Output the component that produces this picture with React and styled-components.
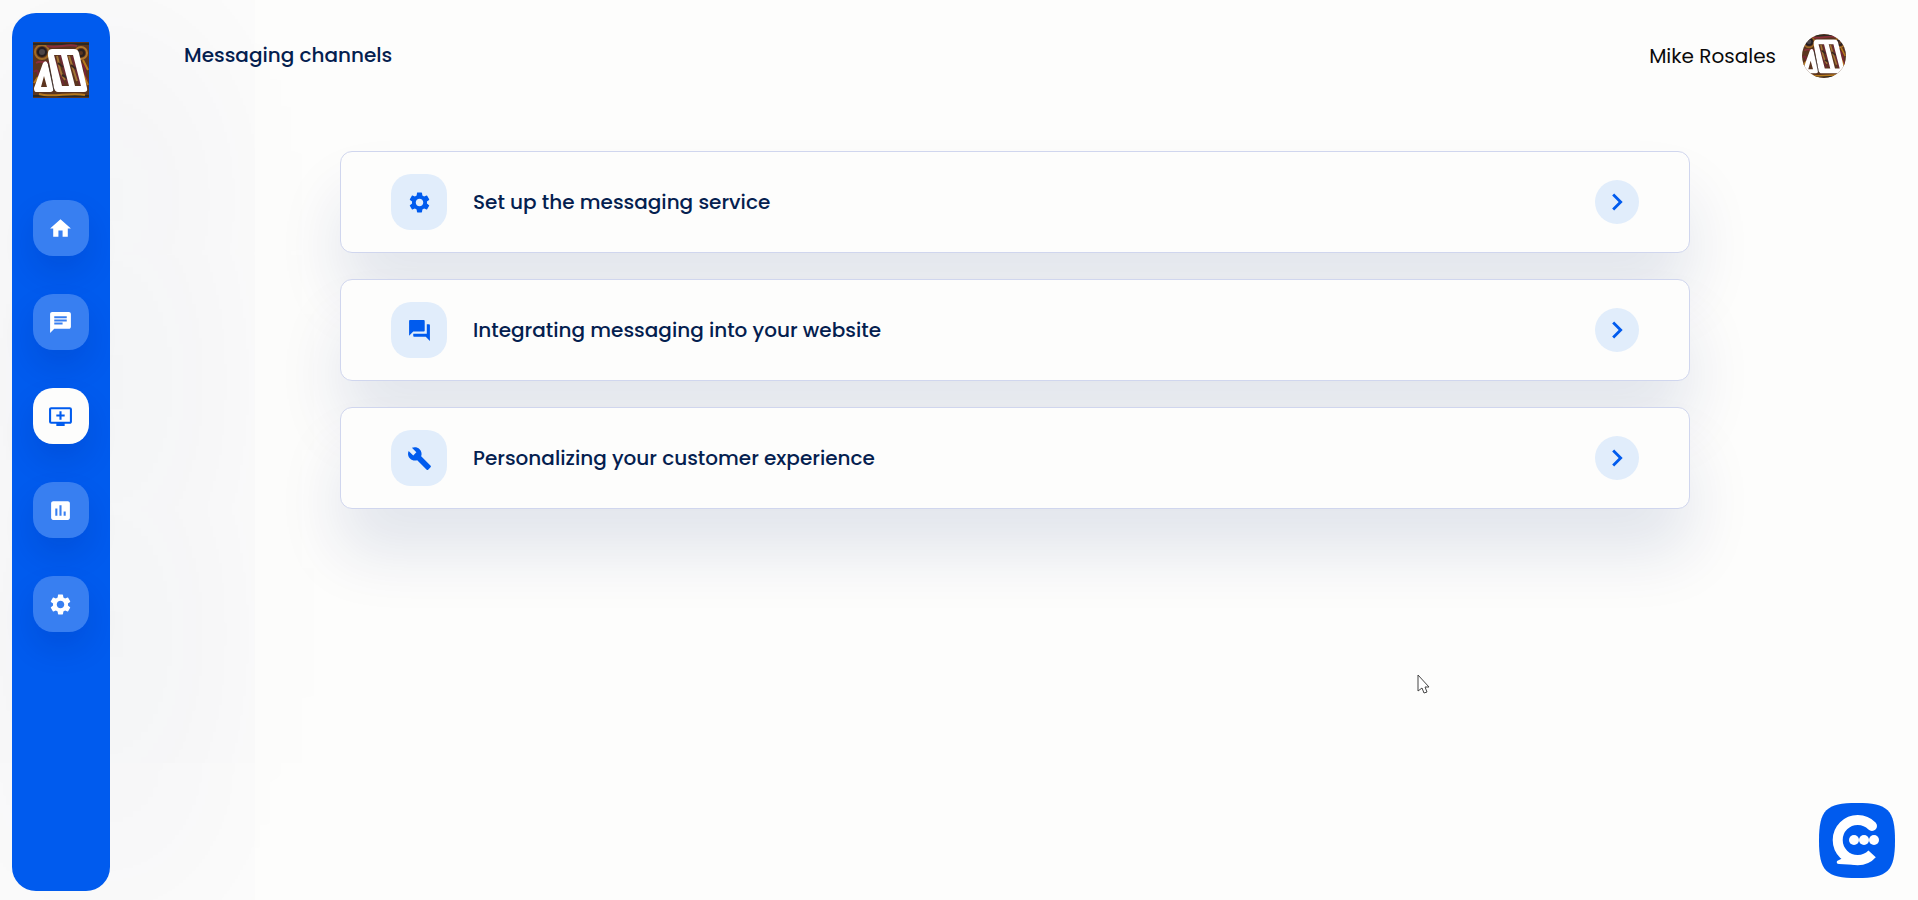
import React from 'react'
import styled, { createGlobalStyle } from 'styled-components'
import {
  MdAddToQueue,
  MdAssessment,
  MdBuild,
  MdChat,
  MdForum,
  MdHome,
  MdKeyboardArrowRight,
  MdSettings,
} from 'react-icons/md'


const GlobalStyle = createGlobalStyle`
  * {
    box-sizing: border-box;
  }

  body {
    background-color: #fdfdfc;
    color: #04204f;
    font-family: Poppins, Inter, "Open Sans", sans-serif;
    font-size: 20px;
    margin: 0;
  }
`

const Page = styled.div`
  display: flex;
  min-height: 100vh;
  padding: 13px 0 9px 12px;
`

const Sidebar = styled.aside`
  align-items: center;
  background-color: #005bee;
  border-radius: 24px;
  box-shadow: 40px 0 260px rgba(0, 32, 110, 0.12);
  display: flex;
  flex: none;
  flex-direction: column;
  gap: 102px;
  padding: 29px 0;
  width: 98px;
  z-index: 1;
`

const LogoLink = styled.a`
  display: block;
  height: 56px;
  width: 56px;
`

const Nav = styled.nav`
  display: flex;
  flex-direction: column;
  gap: 38px;
`

const NavLink = styled.a`
  align-items: center;
  background-color: ${props => props.$active ? '#fdfdfc' : 'rgba(255, 255, 255, 0.22)'};
  border-radius: 20px;
  box-shadow: 0 16px 30px rgba(0, 20, 110, 0.14);
  color: ${props => props.$active ? '#005bee' : '#fff'};
  display: flex;
  font-size: 25px;
  height: 56px;
  justify-content: center;
  padding-right: 1px;
  width: 56px;
`

const Main = styled.main`
  flex: 1;
  min-width: 0;
  padding: 20px 72px 0 74px;
`

const Header = styled.header`
  align-items: flex-start;
  display: flex;
  justify-content: space-between;
  line-height: 44px;
  margin-bottom: 73px;
`

const PageTitle = styled.h1`
  font-size: 20px;
  font-weight: 500;
  margin: 0;
`

const User = styled.a`
  align-items: center;
  color: #0a0a0a;
  display: flex;
  gap: 26px;
  text-decoration: none;
`

const Avatar = styled.span`
  border-radius: 50%;
  display: block;
  height: 44px;
  margin-top: 1px;
  overflow: hidden;
  width: 44px;
`

const CardList = styled.div`
  display: flex;
  flex-direction: column;
  gap: 26px;
  margin: 0 auto;
  max-width: 1350px;
`

const CardButton = styled.button`
  align-items: center;
  background-color: #fdfdfc;
  border: 1px solid #d0d6ee;
  border-radius: 12px;
  box-shadow: 0 44px 64px rgba(0, 32, 110, 0.11);
  color: inherit;
  cursor: pointer;
  display: flex;
  font-family: inherit;
  font-size: 20px;
  font-weight: 500;
  gap: 26px;
  padding: 22px 50px;
  text-align: left;
  width: 100%;
`

const CardIcon = styled.span`
  align-items: center;
  background-color: #e1edfb;
  border-radius: 20px;
  color: #005bee;
  display: flex;
  font-size: 25px;
  height: 56px;
  justify-content: center;
  width: 56px;
`

const CardLabel = styled.span`
  flex: 1;
`

const CardArrow = styled(CardIcon)`
  border-radius: 50%;
  font-size: 34px;
  height: 44px;
  width: 44px;

  path:last-child {
    stroke: currentColor;
  }
`

const ChatButton = styled.button`
  background: none;
  border: 0;
  bottom: 22px;
  cursor: pointer;
  height: 75px;
  padding: 0;
  position: fixed;
  right: 23px;
  width: 76px;
`

const Cursor = styled.svg`
  bottom: 205px;
  pointer-events: none;
  position: fixed;
  right: 488px;
`


const Emblem = () => (
  <svg viewBox="0 0 56 56" width="100%" height="100%" display="block" aria-hidden="true">
    <rect width="56" height="56" fill="#5b351f" />
    <g fill="none" strokeWidth="2">
      <circle cx="9" cy="10" r="7" stroke="#a06a26" />
      <circle cx="9" cy="10" r="4" fill="#4c4448" stroke="#231c20" />
      <circle cx="48" cy="11" r="6" stroke="#b0762a" />
      <circle cx="48" cy="11" r="3" stroke="#2a211f" />
      <path d="M0 2H56M0 54H56" stroke="#2b2922" />
      <path d="M14 4C24 7 34 1 44 4M3 21C10 17 13 24 20 19" stroke="#8a2f3a" />
      <path d="M1 30C7 24 3 38 8 31M48 22C56 26 48 32 55 38" stroke="#7b2538" />
      <path d="M50 18L55 28M49 30L55 43M1 41L5 35M6 52C19 56 37 50 52 53" stroke="#b87a1d" />
      <path d="M20 13L31 43M27 13L35 42M39 14L47 43" stroke="#6d2934" />
      <path d="M24 14C27 23 25 29 32 38M36 14L44 39" stroke="#a37435" />
      <path d="M25 21L30 25M29 33L35 36M38 23L43 27" stroke="#382722" />
    </g>
    <path
      fill="#fff"
      fillRule="evenodd"
      d="M10 21Q13 17 15 22L21 47Q20 50 18 50H3Q1 50 1 46ZM11 34L8 45H14ZM19 7H41Q45 7 46 11L54 46Q55 50 51 50H25Q22 50 21 46L15 14Q14 7 19 7ZM21 13L29 44H36L28 13ZM34 13L42 44H48L40 13Z"
    />
    <path d="M15 20L21 49" stroke="#3b3030" />
  </svg>
)

const NAV_ITEMS = [
  { label: 'Home', icon: MdHome },
  { label: 'Chat', icon: MdChat },
  { label: 'Channels', icon: MdAddToQueue, active: true },
  { label: 'Reports', icon: MdAssessment },
  { label: 'Settings', icon: MdSettings },
]

const CARDS = [
  { label: 'Set up the messaging service', icon: MdSettings },
  { label: 'Integrating messaging into your website', icon: MdForum },
  { label: 'Personalizing your customer experience', icon: MdBuild },
]

const Card = ({ icon: Icon, label }) => (
  <CardButton type="button">
    <CardIcon><Icon /></CardIcon>
    <CardLabel>{label}</CardLabel>
    <CardArrow><MdKeyboardArrowRight /></CardArrow>
  </CardButton>
)

const App = () => (
  <>
    <GlobalStyle />
    <Page>
      <Sidebar>
        <LogoLink href="#" aria-label="Dashboard">
          <Emblem />
        </LogoLink>
        <Nav>
          {NAV_ITEMS.map(({ label, icon: Icon, active }) => (
            <NavLink key={label} href="#" aria-label={label} $active={active}>
              <Icon />
            </NavLink>
          ))}
        </Nav>
      </Sidebar>
      <Main>
        <Header>
          <PageTitle>Messaging channels</PageTitle>
          <User href="#">
            Mike Rosales
            <Avatar><Emblem /></Avatar>
          </User>
        </Header>
        <CardList>
          {CARDS.map(card => <Card key={card.label} {...card} />)}
        </CardList>
      </Main>
    </Page>
    <ChatButton type="button" aria-label="Open chat">
      <svg viewBox="0 0 76 75" width="76" height="75" display="block">
        <path fill="#005bee" d="M0 37.5C0 7 7 0 38 0S76 7 76 37.5S69 75 38 75S0 68 0 37.5Z" />
        <path
          fill="none"
          stroke="#fff"
          strokeLinecap="round"
          strokeWidth="10"
          d="M53 23A20 20 0 1 0 53 51Q47 58 36 57"
        />
        <path fill="#fff" d="M22 48L24 55L18 58Q17 61 20 61L38 62V54Z" />
        <g fill="#fff">
          <circle cx="35" cy="37" r="5" />
          <circle cx="45" cy="37" r="5" />
          <circle cx="55" cy="37" r="5" />
        </g>
      </svg>
    </ChatButton>
    <Cursor width="13" height="21" viewBox="0 0 13 21" aria-hidden="true">
      <path
        d="M1 1V17L5 14L7 19L10 18L8 13H12Z"
        fill="#fff"
        stroke="#444"
        strokeLinejoin="round"
      />
    </Cursor>
  </>
)

export default App
